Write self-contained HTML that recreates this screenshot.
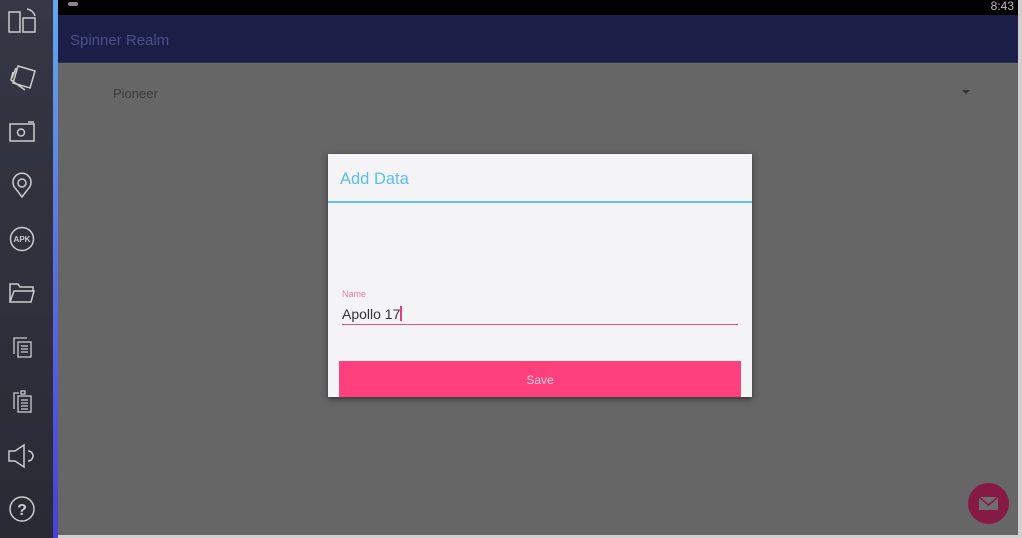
<!DOCTYPE html>
<html><head><meta charset="utf-8"><style>
*{margin:0;padding:0;box-sizing:border-box}
body{width:1022px;height:538px;overflow:hidden;background:#d0d0d0;font-family:"Liberation Sans",sans-serif;position:relative}
.side{position:absolute;left:0;top:0;width:53px;height:538px;background:linear-gradient(#363744,#2a2a35)}
.strip{position:absolute;left:53px;top:0;width:5px;height:538px;background:linear-gradient(#63a8ee,#5a6fe0 50%,#4b3fd6)}
.main{position:absolute;left:58px;top:0;width:960px;height:535px;background:#666}
.status{position:absolute;left:0;top:0;width:960px;height:15px;background:#000;color:#bbb;font-size:12px;text-align:right;padding-right:4px;line-height:13px}
.bar{position:absolute;left:0;top:15px;width:960px;height:48px;background:#1b1f48;border-bottom:1px solid #2a2f60;color:#4a5088;font-size:15px;padding:17px 0 0 12px}
.sp{position:absolute;left:55px;top:86px;color:#3c3c3c;font-size:13px}
.arr{position:absolute;left:904px;top:90px;width:0;height:0;border-left:4px solid transparent;border-right:4px solid transparent;border-top:4px solid #333}
.dlg{position:absolute;left:328px;top:154px;width:424px;height:243px;background:#f4f4f6;box-shadow:0 2px 6px rgba(0,0,0,.5);overflow:hidden}
.t{position:absolute;left:12px;top:16px;color:#5bbfe8;font-size:16.5px}
.ln{position:absolute;left:0;top:47px;width:424px;height:2px;background:#5cc2ea}
.lab{position:absolute;left:14px;top:135px;color:#f27aa4;font-size:9px}
.val{position:absolute;left:14px;top:152px;color:#333;font-size:14px}
.cur{display:inline-block;width:1.5px;height:15px;background:#e04080;vertical-align:-2px}
.ul{position:absolute;left:14px;top:170px;width:396px;height:1px;background:#e05080}
.btn{position:absolute;left:11px;top:207px;width:402px;height:40px;background:#fe407f;color:#fbd0df;font-size:12px;text-align:center;line-height:38px}
.fab{position:absolute;left:910px;top:483px;width:41px;height:41px;border-radius:50%;background:#861a44}
svg.i{position:absolute;left:8px}
</style></head><body>
<div class="side">
<svg class="i" style="top:8px" width="30" height="28" viewBox="0 0 30 28" fill="none" stroke="#ccc" stroke-width="1.5"><rect x="1" y="4" width="11" height="20"/><path d="M15 10h12v14H15z"/><path d="M19 1q6 1 8 7"/></svg>
<svg class="i" style="top:62px" width="32" height="30" viewBox="0 0 32 30" fill="none" stroke="#ccc" stroke-width="1.5"><path d="M10 4l17 5-5 17-17-5z"/><path d="M5 10l-2 8 14 10M8 6l-4 10"/></svg>
<svg class="i" style="top:120px" width="28" height="24" viewBox="0 0 28 24" fill="none" stroke="#ccc" stroke-width="1.5"><rect x="2" y="4" width="24" height="17"/><circle cx="13" cy="12.5" r="3.5"/><path d="M20 2h6"/></svg>
<svg class="i" style="top:172px" width="28" height="28" viewBox="0 0 28 28" fill="none" stroke="#ccc" stroke-width="1.5"><path d="M14 25l-6-8a9 9 0 1 1 12 0z"/><circle cx="14" cy="11" r="4"/></svg>
<svg class="i" style="top:226px" width="28" height="28" viewBox="0 0 28 28"><circle cx="14" cy="13" r="11.5" fill="none" stroke="#ccc" stroke-width="1.5"/><text x="14" y="16" font-size="8" font-weight="bold" fill="#ccc" text-anchor="middle" font-family="Liberation Sans">APK</text></svg>
<svg class="i" style="top:280px" width="28" height="26" viewBox="0 0 28 26" fill="none" stroke="#ccc" stroke-width="1.5"><path d="M2 22V4h8l2 3h13v4M2 22l4-11h20l-3 11z"/></svg>
<svg class="i" style="top:335px" width="28" height="26" viewBox="0 0 28 26" fill="none" stroke="#ccc" stroke-width="1.3"><path d="M6 19V3h13"/><rect x="10" y="7" width="13" height="15"/><path d="M13 11h7M13 14h7M13 17h7"/></svg>
<svg class="i" style="top:388px" width="28" height="28" viewBox="0 0 28 28" fill="none" stroke="#ccc" stroke-width="1.3"><path d="M6 21V5h5M13 3h4v3h-4z"/><rect x="10" y="8" width="13" height="16"/><path d="M13 12h7M13 15h7M13 18h7M13 21h7"/></svg>
<svg class="i" style="top:443px" width="30" height="26" viewBox="0 0 30 26" fill="none" stroke="#ccc" stroke-width="1.5"><path d="M1 8h6l9-6v22l-9-6H1z"/><path d="M20 8a5 5 0 0 1 0 10"/></svg>
<svg class="i" style="top:496px" width="28" height="28" viewBox="0 0 28 28"><circle cx="14" cy="13" r="12" fill="none" stroke="#ccc" stroke-width="1.5"/><text x="14" y="19" font-size="16" font-weight="bold" fill="#ccc" text-anchor="middle" font-family="Liberation Sans">?</text></svg>
</div>
<div class="strip"></div>
<div class="main">
<div class="status"><span style="position:absolute;left:10px;top:2px;width:10px;height:4px;background:#888;border-radius:2px"></span>8:43</div>
<div class="bar">Spinner Realm</div>
<div class="sp">Pioneer</div>
<div class="arr"></div>
<div class="fab"><svg width="41" height="41" viewBox="0 0 41 41"><rect x="11" y="14" width="19" height="13" fill="#6e6e6e"/><path d="M11 14l9.5 8 9.5-8" fill="none" stroke="#861a44" stroke-width="1.5"/></svg></div>
</div>
<div class="dlg">
<div class="t">Add Data</div><div class="ln"></div>
<div class="lab">Name</div>
<div class="val">Apollo 17<span class="cur"></span></div>
<div class="ul"></div>
<div class="btn">Save</div>
</div>
</body></html>
